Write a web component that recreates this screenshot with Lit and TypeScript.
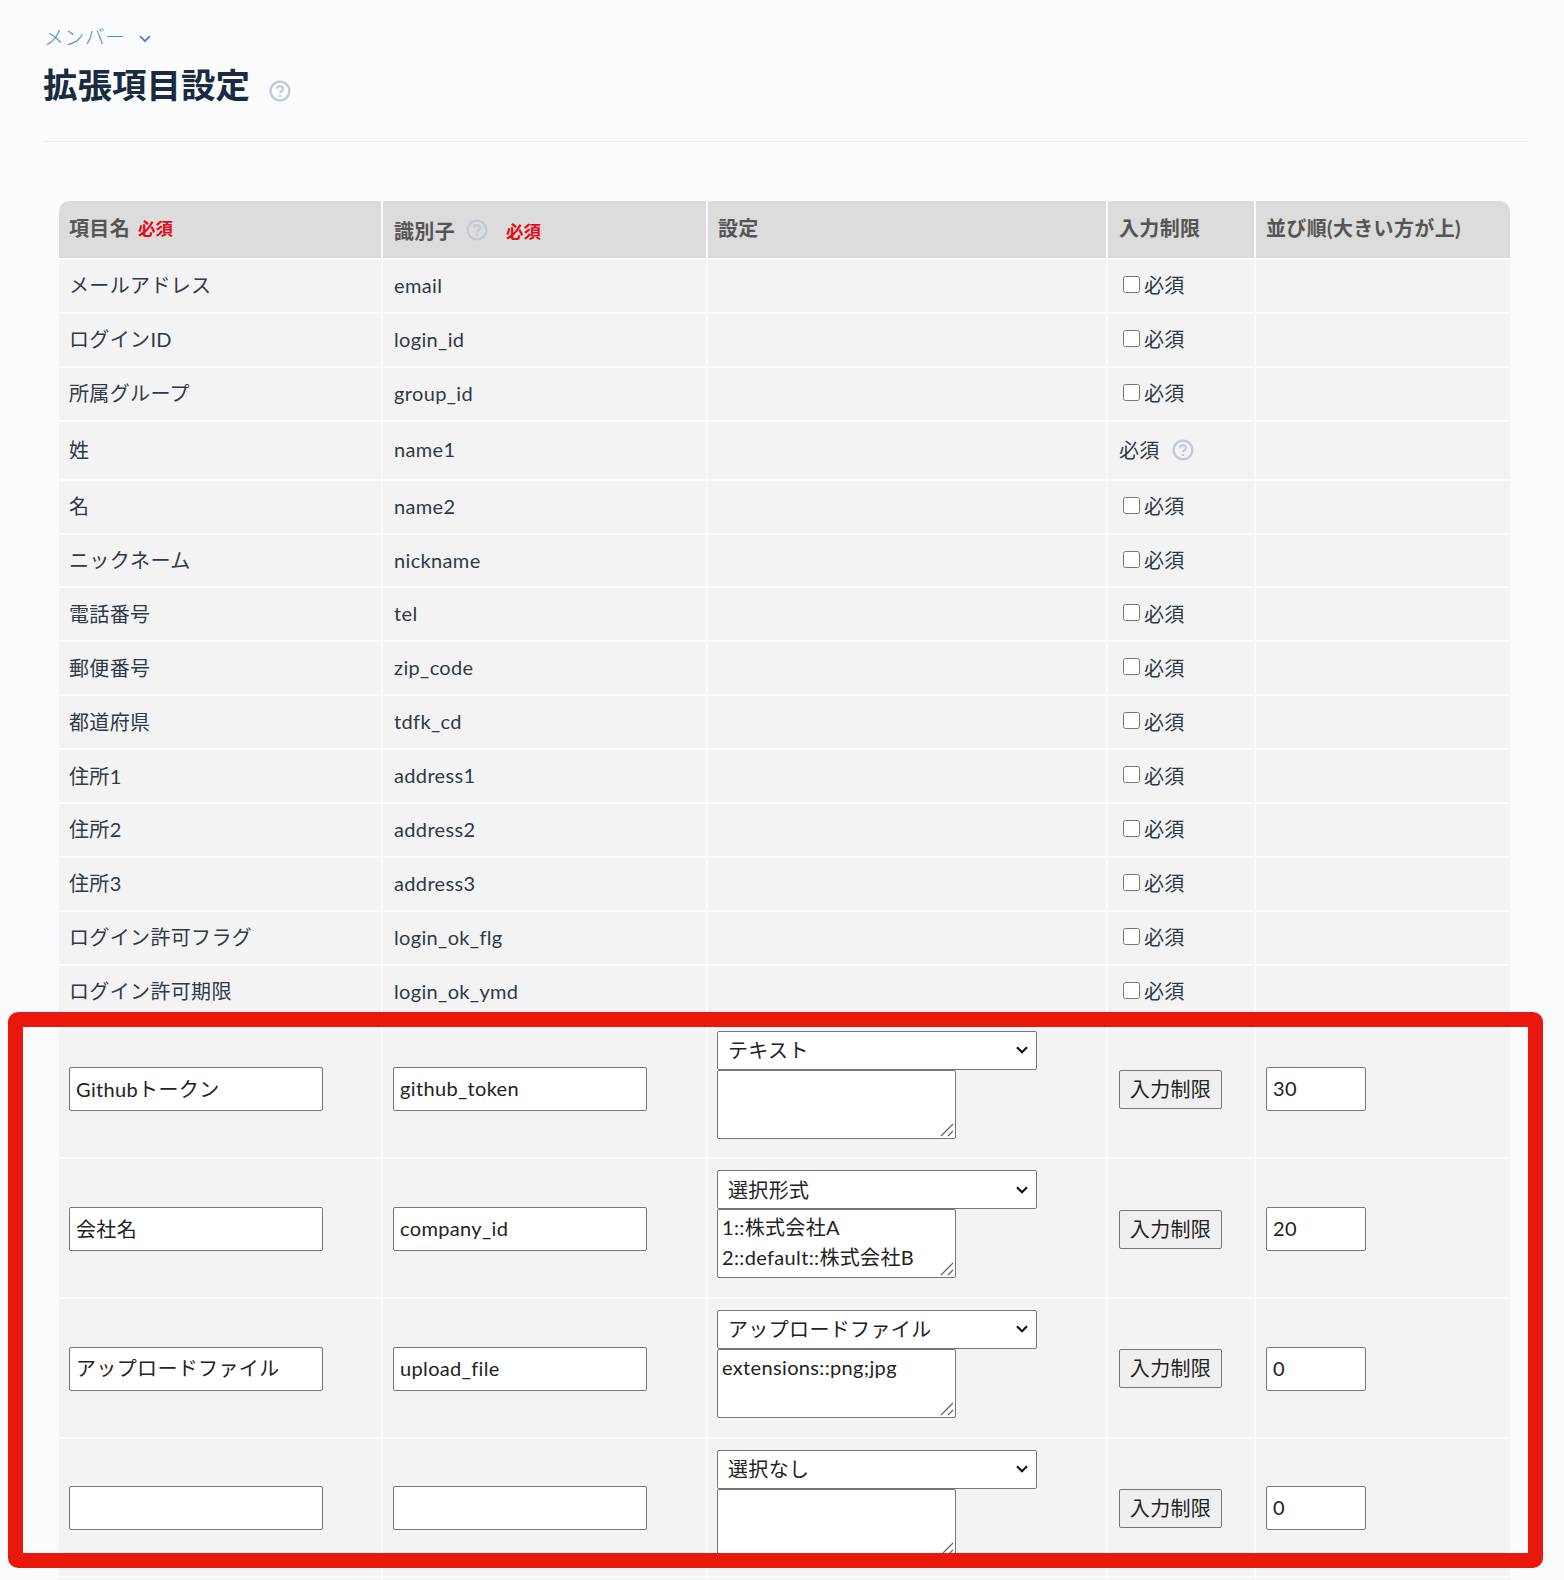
import { LitElement, html, css, svg } from "lit";
import { customElement } from "lit/decorators.js";

const help = () => html`<svg class="help" viewBox="0 0 22 22" width="22" height="22" fill="none" stroke="currentColor" stroke-width="2.4" aria-hidden="true">
  ${svg`<circle cx="11" cy="11" r="9.4"></circle>
  <path d="M7.9 8.6a3.1 3.1 0 0 1 6.1.4c0 2.1-3 2.3-3 4.2" stroke-width="2.2"></path>
  <path d="M11 15.2v1.8" stroke-width="2.2"></path>`}
</svg>`;

const basic: [string, string, string?][] = [
  ["メールアドレス", "email"],
  ["ログインID", "login_id"],
  ["所属グループ", "group_id"],
  ["姓", "name1", "fixed"],
  ["名", "name2"],
  ["ニックネーム", "nickname"],
  ["電話番号", "tel"],
  ["郵便番号", "zip_code"],
  ["都道府県", "tdfk_cd"],
  ["住所1", "address1"],
  ["住所2", "address2"],
  ["住所3", "address3"],
  ["ログイン許可フラグ", "login_ok_flg"],
  ["ログイン許可期限", "login_ok_ymd"],
];

const ext = [
  { name: "Githubトークン", id: "github_token", type: "テキスト", val: "", order: "30" },
  { name: "会社名", id: "company_id", type: "選択形式", val: "1::株式会社A\n2::default::株式会社B", order: "20" },
  { name: "アップロードファイル", id: "upload_file", type: "アップロードファイル", val: "extensions::png;jpg", order: "0" },
  { name: "", id: "", type: "選択なし", val: "", order: "0" },
];

@customElement("app-root")
export class AppRoot extends LitElement {
  static styles = css`
    :host {
      display: block;
      position: relative;
      height: 1580px;
      overflow: hidden;
      background: #fafbfd;
      color: #2f3a47;
      font-family: Lato, "Noto Sans CJK JP", sans-serif;
      font-size: 20px;
      letter-spacing: 0.35px;
    }
    .page { padding: 0 36px 0 44px; }
    .crumb {
      display: flex;
      align-items: center;
      gap: 14px;
      height: 24px;
      padding-top: 25px;
      color: #4f86d0;
      font-weight: 300;
      line-height: 24px;
    }
    .crumb svg { margin-top: 4px; }
    .title {
      display: flex;
      align-items: center;
      gap: 19px;
      height: 93px;
      border-bottom: 1px solid #ebedf0;
      margin: 0 0 59px -1px;
      box-sizing: border-box;
    }
    h1 {
      margin: 0 0 20px;
      font-size: 34.5px;
      letter-spacing: 0;
      line-height: 50px;
      font-weight: 700;
      color: #1a2a40;
    }
    .title .help { margin-bottom: 8px; }
    .help { color: #c2c9d7; flex: none; }
    table {
      width: 1451px;
      margin-left: 15px;
      table-layout: fixed;
      border-collapse: separate;
      border-spacing: 0;
    }
    th, td {
      box-sizing: border-box;
      background: #f3f3f3;
      border-right: 2px solid #fafbfd;
      border-bottom: 2px solid #fafbfd;
      padding: 0 10px;
      text-align: left;
      font-weight: 400;
    }
    th:last-child, td:last-child { border-right: 0; }
    th {
      height: 59px;
      padding-bottom: 4px;
      background: #dcdcdc;
      color: #555;
      font-weight: 700;
    }
    th.limit { padding-left: 11px; }
    th:first-child { border-top-left-radius: 10px; }
    th:last-child { border-top-right-radius: 10px; }
    th .cell { display: flex; align-items: center; gap: 8px; }
    th .id { padding: 6px 0 0 1px; gap: 11px; }
    th .id .help { margin: -1px 7px 0 0; }
    .req { color: #e60b16; font-size: 17.5px; font-weight: 700; letter-spacing: 0; }
    tr.b td { height: 53.9px; padding-bottom: 2px; }
    tr.tall td { height: 59px; }
    tr.x td { height: 139.7px; padding-top: 2px; }
    tr.end td { height: 10px; }
    td.limit { padding-left: 11px; }
    .check { display: flex; align-items: center; padding-left: 4px; }
    .check input { width: 17px; height: 17px; margin: 0 4px 1px 0; }
    .fixed { display: flex; align-items: center; gap: 12px; }
    .fixed .help { margin-top: 2px; }
    input[type="text"], select, textarea, button {
      font: inherit;
      letter-spacing: inherit;
      color: #222;
      box-sizing: border-box;
      display: block;
    }
    .text {
      width: 254px;
      height: 44px;
      padding: 0 6px 2px;
      border: 1px solid #767676;
      border-radius: 2px;
      background: #fff;
    }
    td.idc span { margin-left: 1px; }
    tr.x td.stack { vertical-align: top; padding-top: 11px; padding-left: 9px; }
    td.stack select {
      appearance: none;
      -webkit-appearance: none;
      width: 320px;
      height: 39px;
      padding: 0 30px 0 10px;
      border: 1px solid #767676;
      border-radius: 2px;
      background-color: #fff;
      background-image: url("data:image/svg+xml,%3Csvg xmlns='http://www.w3.org/2000/svg' viewBox='0 0 12 8'%3E%3Cpath d='M1 1.2l5 5 5-5' fill='none' stroke='%23111' stroke-width='2.1'/%3E%3C/svg%3E");
      background-repeat: no-repeat;
      background-size: 12px 8px;
      background-position: right 8px center;
    }
    td.stack textarea {
      width: 239px;
      height: 69px;
      padding: 2px 4px;
      border: 1px solid #767676;
      border-radius: 2px;
      line-height: 30px;
      overflow: hidden;
      resize: none;
      background-color: #fff;
      background-image: url("data:image/svg+xml,%3Csvg xmlns='http://www.w3.org/2000/svg' viewBox='0 0 14 14'%3E%3Cpath d='M1 13L13 1M8 13l5-5' fill='none' stroke='%23666' stroke-width='1.3'/%3E%3C/svg%3E");
      background-repeat: no-repeat;
      background-size: 14px 14px;
      background-position: right 1px bottom 1px;
    }
    button {
      width: 103px;
      height: 39px;
      padding: 0 0 2px;
      background: #efefef;
      border: 1px solid #767676;
      border-radius: 2px;
    }
    .num {
      width: 100px;
      height: 44px;
      padding: 0 6px 2px;
      border: 1px solid #767676;
      border-radius: 2px;
      background: #fff;
    }
    .frame {
      position: absolute;
      left: 8px;
      top: 1012px;
      width: 1535px;
      height: 556px;
      box-sizing: border-box;
      border: 15px solid #e8190c;
      border-radius: 10px;
      pointer-events: none;
    }
  `;

  render() {
    return html`
      <div class="page">
        <div class="crumb">
          <span>メンバー</span>
          <svg viewBox="0 0 12 8" width="12" height="8" fill="none" stroke="#4f7fc4" stroke-width="1.8"><path d="M1 1.2l5 5 5-5"></path></svg>
        </div>
        <div class="title"><h1>拡張項目設定</h1>${help()}</div>
        <table>
          <colgroup>
            <col style="width:324px" /><col style="width:325px" /><col style="width:400px" /><col style="width:148px" /><col style="width:254px" />
          </colgroup>
          <thead>
            <tr>
              <th><div class="cell"><span>項目名</span><span class="req">必須</span></div></th>
              <th><div class="cell id"><span>識別子</span>${help()}<span class="req">必須</span></div></th>
              <th>設定</th>
              <th class="limit">入力制限</th>
              <th>並び順(大きい方が上)</th>
            </tr>
          </thead>
          <tbody>
            ${basic.map(
              ([n, id, f]) => html`<tr class="b ${f ? "tall" : ""}">
                <td>${n}</td>
                <td class="idc"><span>${id}</span></td>
                <td></td>
                <td class="limit">
                  ${f
                    ? html`<div class="fixed"><span>必須</span>${help()}</div>`
                    : html`<label class="check"><input type="checkbox" /><span>必須</span></label>`}
                </td>
                <td></td>
              </tr>`
            )}
            ${ext.map(
              (r) => html`<tr class="x">
                <td><input class="text" type="text" .value=${r.name} /></td>
                <td class="idc"><input class="text" type="text" .value=${r.id} /></td>
                <td class="stack">
                  <select><option>${r.type}</option></select>
                  <textarea .value=${r.val}></textarea>
                </td>
                <td class="limit"><button>入力制限</button></td>
                <td><input class="num" type="text" .value=${r.order} /></td>
              </tr>`
            )}
            <tr class="end"><td></td><td></td><td></td><td></td><td></td></tr>
          </tbody>
        </table>
      </div>
      <div class="frame"></div>
    `;
  }
}
